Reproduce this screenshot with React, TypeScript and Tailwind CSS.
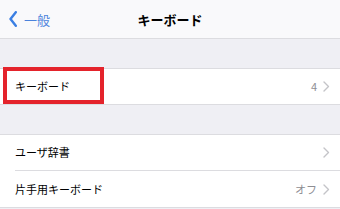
import React from 'react';

const FONT = { fontFamily: '"Noto Sans CJK JP", "Noto Sans", sans-serif' };

function Chevron() {
  return (
    <svg width="7" height="11" viewBox="0 0 7 11" className="ml-[6px]">
      <path d="M1 1 L5.5 5.5 L1 10" fill="none" stroke="#c4c4c8" strokeWidth="1.4" strokeLinecap="round" strokeLinejoin="round" />
    </svg>
  );
}

interface RowProps {
  label: string;
  detail?: string;
  last?: boolean;
}

function Row({ label, detail, last = true }: RowProps) {
  return (
    <div className="pl-[15px] bg-white">
      <div className={`h-[36px] flex items-center pr-[10px] ${last ? '' : 'border-b border-[#dcdce0]'}`}>
        <span className="flex-1 text-[11px] text-black leading-none">{label}</span>
        {detail && <span className="text-[11px] text-[#8e8e93] leading-none">{detail}</span>}
        <Chevron />
      </div>
    </div>
  );
}

export default function App() {
  return (
    <div className="relative w-[340px] h-[209px] bg-[#efeff4] overflow-hidden" style={FONT}>
      <div className="h-[39px] bg-[#f9f9fb] border-b border-[#dcdce0] flex items-center relative">
        <div className="flex items-center pl-[9px]">
          <svg width="8" height="16" viewBox="0 0 8 16">
            <path d="M6.8 1.2 L1.5 8 L6.8 14.8" fill="none" stroke="#3b7fe3" strokeWidth="2.4" strokeLinecap="round" strokeLinejoin="round" />
          </svg>
          <span className="ml-[7px] text-[13px] text-[#4a82dc] leading-none">一般</span>
        </div>
        <span className="absolute left-0 right-0 text-center text-[13px] font-bold text-black leading-none pointer-events-none">
          キーボード
        </span>
      </div>

      <div className="mt-[29px] border-y border-[#dcdce0]">
        <div className="bg-white pl-[15px] h-[35px] flex items-center pr-[10px]">
          <span className="flex-1 text-[11px] text-black leading-none">キーボード</span>
          <span className="text-[11px] text-[#8e8e93] leading-none">4</span>
          <Chevron />
        </div>
      </div>

      <div className="mt-[29px] border-y border-[#dcdce0]">
        <Row label="ユーザ辞書" last={false} />
        <Row label="片手用キーボード" detail="オフ" />
      </div>

      <div className="absolute left-[3px] top-[67px] w-[101px] h-[37px] border-4 border-[#e4232b]" />
    </div>
  );
}
